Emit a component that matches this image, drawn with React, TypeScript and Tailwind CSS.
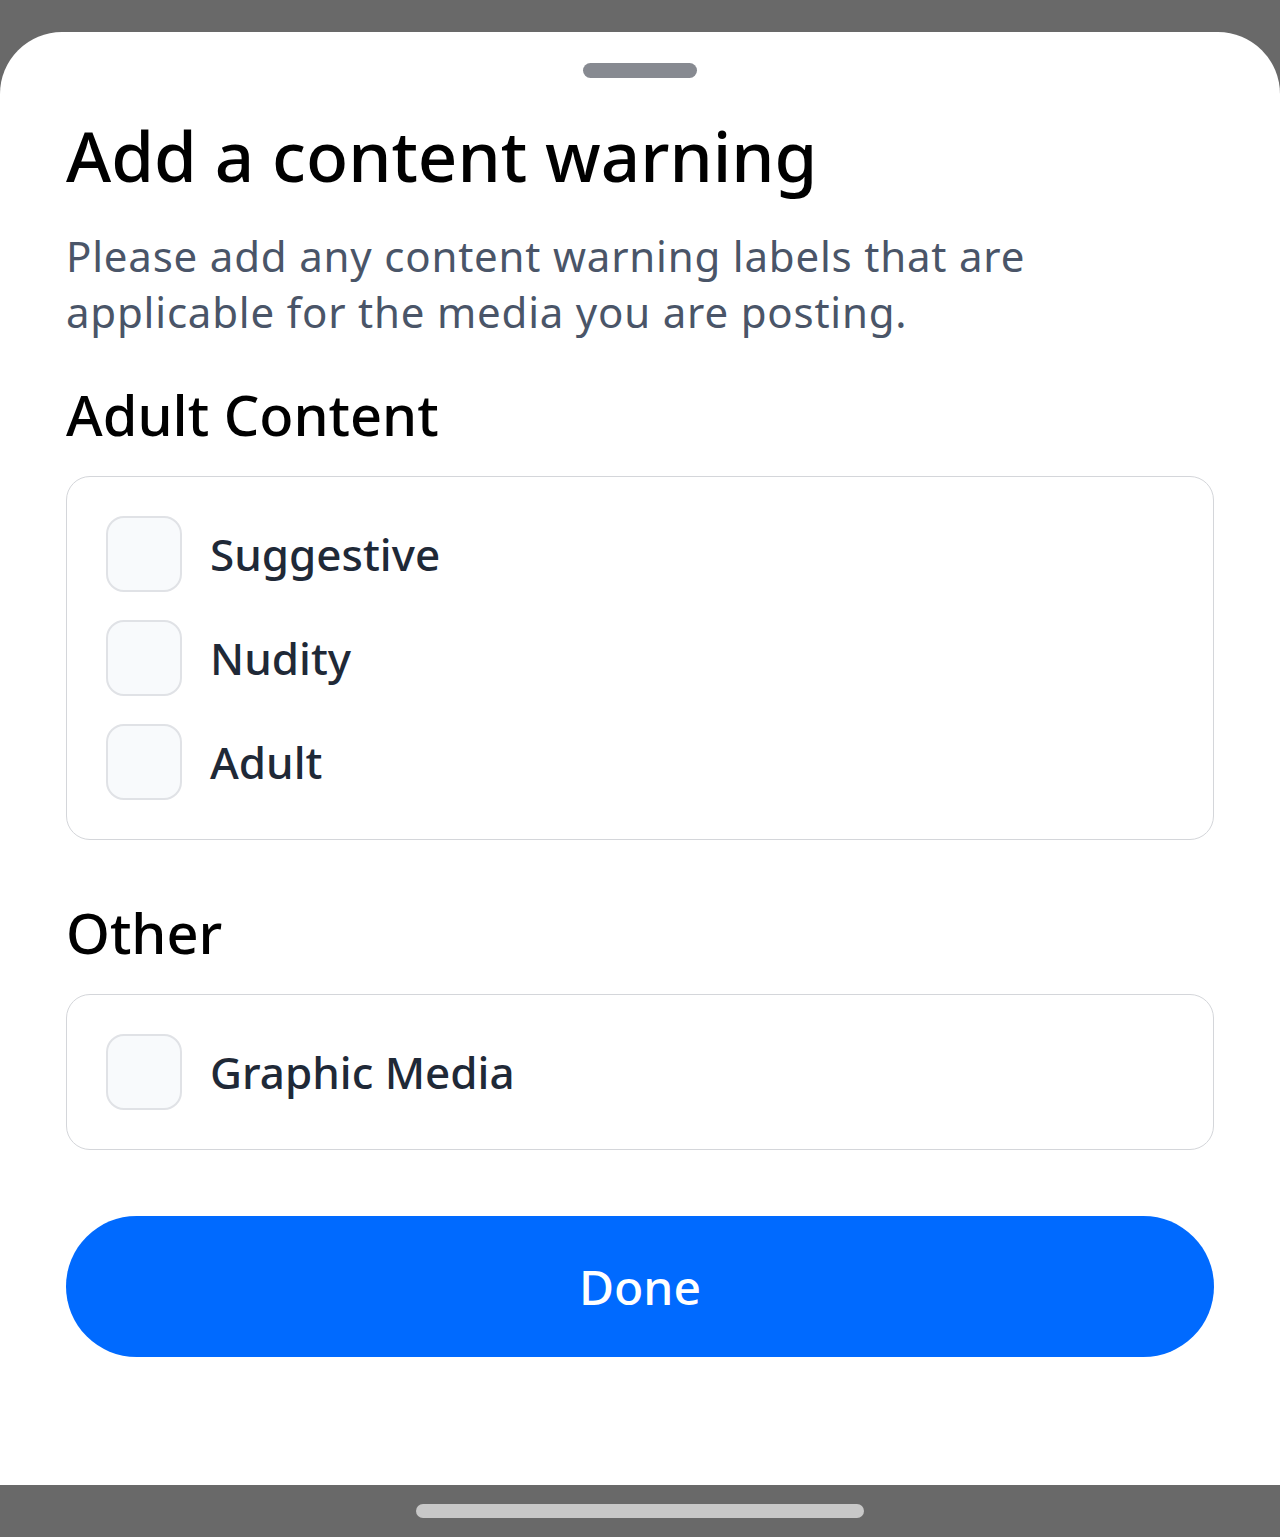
import React from 'react';

const font = { fontFamily: '"Noto Sans", Inter, sans-serif' };

function Option({ label }: { label: string }) {
  return (
    <div className="flex items-center gap-[28px]">
      <div className="w-[76px] h-[76px] rounded-[18px] border-2 border-[#e0e2e6] bg-[#f8fafc]" />
      <span className="text-[44px] leading-[76px] font-medium text-[#1f2937]">{label}</span>
    </div>
  );
}

function Group({ title, options, mt }: { title: string; options: string[]; mt: string }) {
  return (
    <>
      <h2 className={`${mt} text-[56px] leading-[64px] font-medium text-black`}>{title}</h2>
      <div className="mt-[30px] flex flex-col gap-[28px] rounded-[24px] border border-[#d4d6da] p-[39px]">
        {options.map((o) => (
          <Option key={o} label={o} />
        ))}
      </div>
    </>
  );
}

export default function App() {
  return (
    <div className="flex h-[1537px] w-[1280px] flex-col bg-[#696969]" style={font}>
      <div className="h-[32px]" />
      <div className="flex flex-1 flex-col rounded-t-[62px] bg-white px-[66px] pt-[31px]">
        <div className="mx-auto h-[15px] w-[114px] rounded-full bg-[#878a91]" />
        <h1 className="mt-[37px] text-[69px] leading-[80px] font-medium text-black">
          Add a content warning
        </h1>
        <p className="mt-[33px] text-[42px] leading-[56px] tracking-[0.8px] text-[#4a5568]">
          Please add any content warning labels that are applicable for the media you are posting.
        </p>
        <Group title="Adult Content" options={['Suggestive', 'Nudity', 'Adult']} mt="mt-[42px]" />
        <Group title="Other" options={['Graphic Media']} mt="mt-[60px]" />
        <button className="mt-[66px] h-[141px] w-full rounded-full bg-[#006aff] text-[48px] font-medium text-white">
          Done
        </button>
      </div>
      <div className="flex h-[52px] items-center justify-center">
        <div className="h-[14px] w-[448px] rounded-full bg-[#c8c8c8]" />
      </div>
    </div>
  );
}
